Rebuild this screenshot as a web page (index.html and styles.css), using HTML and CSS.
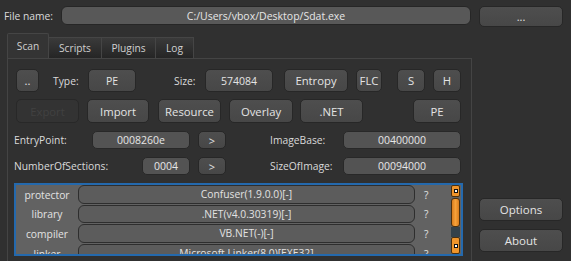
FILE: index.html
```html
<!DOCTYPE html>
<html>
<head>
<meta charset="utf-8">
<link rel="stylesheet" href="styles.css">
</head>
<body>
<div class="app">
  <div class="top">
    <span class="lbl fn-lbl">File name:</span>
    <div class="fn">C:/Users/vbox/Desktop/Sdat.exe</div>
    <div class="btn browse">...</div>
  </div>
  <div class="main">
    <div class="tabw">
      <div class="tabbar">
        <div class="tab sel">Scan</div>
        <div class="tab t-scripts">Scripts</div>
        <div class="tab t-plugins">Plugins</div>
        <div class="tab t-log">Log</div>
      </div>
      <div class="pane">
        <div class="row r1">
          <div class="btn b-dots">..</div>
          <span class="lbl l-type">Type:</span>
          <div class="btn val v-type">PE</div>
          <span class="lbl l-size">Size:</span>
          <div class="btn val v-size">574084</div>
          <div class="btn b-entropy">Entropy</div>
          <div class="btn b-flc">FLC</div>
          <div class="btn b-s">S</div>
          <div class="btn b-h">H</div>
        </div>
        <div class="row r2">
          <div class="btn dis b-export">Export</div>
          <div class="btn b-import">Import</div>
          <div class="btn b-resource">Resource</div>
          <div class="btn b-overlay">Overlay</div>
          <div class="btn b-net">.NET</div>
          <div class="btn b-pe">PE</div>
        </div>
        <div class="row r3">
          <span class="lbl l-ep">EntryPoint:</span>
          <div class="fld f-ep">0008260e</div>
          <div class="btn small b-go">&gt;</div>
          <span class="lbl l-right">ImageBase:</span>
          <div class="fld f-right">00400000</div>
        </div>
        <div class="row r4">
          <span class="lbl l-nos">NumberOfSections:</span>
          <div class="fld f-nos">0004</div>
          <div class="btn small b-go">&gt;</div>
          <span class="lbl l-right">SizeOfImage:</span>
          <div class="fld f-right">00094000</div>
        </div>
        <div class="table">
          <div class="rows">
            <div class="trow"><span class="tname">protector</span><span class="tval">Confuser(1.9.0.0)[-]</span><span class="tq">?</span></div>
            <div class="trow"><span class="tname">library</span><span class="tval">.NET(v4.0.30319)[-]</span><span class="tq">?</span></div>
            <div class="trow"><span class="tname">compiler</span><span class="tval">VB.NET(-)[-]</span><span class="tq">?</span></div>
            <div class="trow"><span class="tname">linker</span><span class="tval">Microsoft Linker(8.0)[EXE32]</span><span class="tq">?</span></div>
          </div>
          <div class="sbar">
            <div class="sb-btn sb-up"><span class="mark"></span></div>
            <div class="sb-handle"></div>
            <div class="sb-track"></div>
            <div class="sb-btn sb-down"><span class="mark"></span></div>
          </div>
        </div>
      </div>
    </div>
    <div class="side">
      <div class="btn sbtn">Options</div>
      <div class="btn sbtn">About</div>
    </div>
  </div>
</div>
</body>
</html>
```
FILE: styles.css
```css
* { box-sizing: border-box; }
html, body { margin: 0; padding: 0; overflow: hidden; }
body {
  background: #303030;
  width: 571px;
  height: 261px;
  font-family: "Open Sans", "Noto Sans", sans-serif;
  color: #dcdcdc;
}
.app { width: 571px; }
.top {
  display: flex;
  align-items: flex-start;
  padding-top: 6px;
}
.lbl {
  font-size: 10.3px;
  color: #dadada;
  white-space: nowrap;
  display: flex;
  align-items: center;
}
.fn-lbl {
  width: 61px;
  height: 19px;
  padding-left: 4px;
}
.fn {
  width: 410px;
  height: 19px;
  background: #585858;
  border: 1px solid #262626;
  border-radius: 6px;
  font-size: 10.5px;
  color: #e6e6e6;
  display: flex;
  align-items: center;
  justify-content: center;
}
.btn {
  display: flex;
  align-items: center;
  justify-content: center;
  background: linear-gradient(#4e4e4e, #474747);
  border: 1px solid #272727;
  border-radius: 5px;
  color: #e4e4e4;
  font-size: 11.3px;
  white-space: nowrap;
}
.browse {
  width: 84px;
  height: 21px;
  margin-left: 8px;
  font-size: 11px;
}
.main {
  display: flex;
  margin-top: 6px;
}
.tabw {
  margin-left: 7px;
  width: 465px;
}
.tabbar {
  display: flex;
  align-items: flex-end;
  height: 25px;
}
.tab {
  height: 21px;
  border: 1px solid #454545;
  border-bottom: none;
  border-left: none;
  background: linear-gradient(#3a3a3a, #252525);
  font-size: 10.2px;
  color: #d0d0d0;
  display: flex;
  align-items: center;
  justify-content: center;
}
.tab.sel {
  height: 25px;
  width: 42px;
  border-left: 1px solid #454545;
  background: #343434;
  border-radius: 2px 2px 0 0;
}
.t-scripts { width: 53px; }
.t-plugins { width: 54px; }
.t-log { width: 38px; }
.pane {
  border: 1px solid #444;
  height: 210px;
  padding: 10px 0 0 6px;
}
.row {
  display: flex;
  align-items: stretch;
}
.r1 { height: 23px; }
.r2 { height: 24px; margin-top: 7px; }
.r3 { height: 18px; margin-top: 8px; }
.r4 { height: 18px; margin-top: 8px; }
.val { font-size: 10.5px; }
.b-dots { margin-left: 2px; width: 23px; }
.l-type { margin-left: 14px; width: 35px; }
.v-type { width: 48px; }
.l-size { margin-left: 38px; width: 31px; }
.v-size { width: 68px; }
.b-entropy { margin-left: 11px; width: 64px; }
.b-flc { margin-left: 8px; width: 26px; }
.b-s { margin-left: 15px; width: 28px; }
.b-h { margin-left: 8px; width: 28px; }
.b-export { margin-left: 2px; width: 63px; }
.dis {
  background: #333;
  border-color: #282828;
  color: #414141;
}
.b-import { margin-left: 8px; width: 62px; }
.b-resource { margin-left: 9px; width: 63px; }
.b-overlay { margin-left: 8px; width: 64px; }
.b-net { margin-left: 7px; width: 63px; }
.b-pe { margin-left: 50px; width: 48px; }
.fld {
  display: flex;
  align-items: center;
  justify-content: center;
  background: #535353;
  border: 1px solid #282828;
  border-radius: 5px;
  font-size: 10.5px;
  color: #e6e6e6;
}
.l-ep { width: 78px; }
.f-ep { width: 98px; }
.b-go { margin-left: 8px; width: 28px; font-size: 11px; }
.l-right { margin-left: 44px; width: 73px; }
.f-right { width: 118px; }
.l-nos { width: 128px; }
.f-nos { width: 48px; }
.table {
  margin-top: 8px;
  width: 449px;
  height: 73px;
  border: 2px solid #2469ad;
  background: #626262;
  display: flex;
  overflow: hidden;
}
.rows {
  flex: 1;
  overflow: hidden;
}
.trow {
  display: flex;
  height: 19.6px;
  align-items: stretch;
  font-size: 10.3px;
  color: #e2e2e2;
}
.tname {
  width: 62px;
  display: flex;
  align-items: center;
  justify-content: center;
}
.tval {
  width: 337px;
  margin-bottom: 1px;
  border: 1px solid #2e2e2e;
  border-radius: 6px;
  background: #5c5c5c;
  display: flex;
  align-items: center;
  justify-content: center;
  white-space: nowrap;
}
.tq {
  padding-left: 9px;
  display: flex;
  align-items: center;
  width: 36px;
}
.sbar {
  width: 9px;
  margin-right: 1px;
  display: flex;
  flex-direction: column;
}
.sb-btn {
  background: #f0952b;
  border: 1px solid #4a3010;
  border-radius: 2px;
  display: flex;
  align-items: center;
  justify-content: center;
}
.sb-up { height: 12px; }
.sb-down { height: 17px; }
.mark {
  width: 4px;
  height: 4px;
  background: #fff;
  border: 1px solid #111;
}
.sb-handle {
  height: 29px;
  margin-top: 1px;
  background: linear-gradient(90deg, #d97c1c, #f7a23a 50%, #d97c1c);
  border: 1px solid #4a3010;
  border-radius: 3px;
}
.sb-track {
  height: 10px;
  background: #34414a;
}
.side {
  margin-left: 7px;
  width: 84px;
  display: flex;
  flex-direction: column;
  padding-top: 165px;
  gap: 8px;
}
.sbtn {
  height: 23px;
  font-size: 11.5px;
}
```
